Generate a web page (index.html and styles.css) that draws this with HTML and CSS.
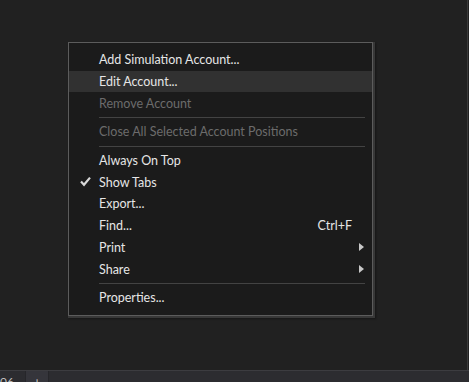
FILE: index.html
```html
<!DOCTYPE html>
<html lang="en">
<head>
    <meta charset="UTF-8">
    <meta name="viewport" content="width=device-width, initial-scale=1.0">
    <title>Accounts - Context Menu</title>
    <link rel="stylesheet" href="styles.css">
</head>
<body>
    <div class="workspace">
        <!-- Context menu over the accounts grid -->
        <ul class="context-menu">
            <li class="item">Add Simulation Account...</li>
            <li class="item hover">Edit Account...</li>
            <li class="item disabled">Remove Account</li>
            <li class="sep"></li>
            <li class="item disabled">Close All Selected Account Positions</li>
            <li class="sep"></li>
            <li class="item">Always On Top</li>
            <li class="item checked">
                <svg class="check" width="11" height="11" viewBox="0 0 11 11">
                    <path d="M1 5.6 L4 8.8 L10 1.6" fill="none" stroke="#d8d8d8" stroke-width="2.2"/>
                </svg>
                Show Tabs
            </li>
            <li class="item">Export...</li>
            <li class="item">Find...<span class="shortcut">Ctrl+F</span></li>
            <li class="item">Print<span class="arrow"></span></li>
            <li class="item">Share<span class="arrow"></span></li>
            <li class="sep"></li>
            <li class="item">Properties...</li>
        </ul>
    </div>

    <div class="tab-bar">
        <div class="tab">06</div>
        <div class="tab add">+</div>
    </div>
</body>
</html>
```

FILE: styles.css
```css
* {
    margin: 0;
    padding: 0;
    box-sizing: border-box;
}

body {
    background-color: #212121;
    height: 100vh;
    display: flex;
    flex-direction: column;
    font-family: Lato, "Open Sans", sans-serif;
    overflow: hidden;
}

.workspace {
    position: relative;
    flex: 1;
    border-right: 1px solid #3a3a3a;
    margin-right: 1px;
}

/* Context menu */
.context-menu {
    position: absolute;
    left: 68px;
    top: 42px;
    width: 305px;
    list-style: none;
    background-color: #1b1b1b;
    border: 1px solid #5c5c5c;
    box-shadow: 1px 1px 0 1px #383838, 2px 2px 2px 1px rgba(0, 0, 0, 0.35);
    padding: 6px 0;
}

.item {
    position: relative;
    height: 21.7px;
    display: flex;
    align-items: center;
    padding-left: 30px;
    padding-right: 19px;
    font-size: 12.5px;
    color: #e6e6e6;
    white-space: nowrap;
}

.item.hover {
    background-color: #313131;
}

.item.disabled {
    color: #6c6c6c;
}

.check {
    position: absolute;
    left: 11px;
    top: 5px;
}

.shortcut {
    margin-left: auto;
    margin-right: 1px;
}

.arrow {
    margin-left: auto;
    margin-right: -11px;
    width: 0;
    height: 0;
    border-top: 4px solid transparent;
    border-bottom: 4px solid transparent;
    border-left: 5px solid #c8c8c8;
}

.sep {
    height: 1px;
    margin: 3px 7px 3px 30px;
    background-color: #434343;
}

/* Bottom tab strip */
.tab-bar {
    height: 12px;
    display: flex;
    background-color: #2c2c30;
    border-top: 1px solid #3c3c40;
}

.tab {
    width: 26px;
    border-right: 1px solid #26262a;
    font-size: 12px;
    color: #bfbfbf;
    line-height: 22px;
    overflow: hidden;
}

.tab.add {
    width: 23px;
    background-color: #35353b;
    text-align: center;
    font-size: 14px;
    line-height: 22px;
}
```
